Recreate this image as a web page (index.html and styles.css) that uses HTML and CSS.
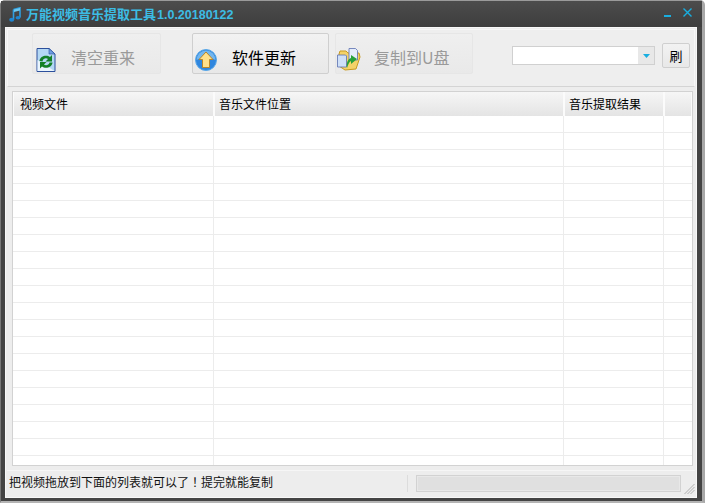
FILE: index.html
```html
<!DOCTYPE html>
<html lang="zh">
<head>
<meta charset="utf-8">
<title>万能视频音乐提取工具</title>
<link rel="stylesheet" href="styles.css">
</head>
<body>
<div class="window">
  <header class="titlebar">
    <svg class="app-icon" width="12" height="15" viewBox="0 0 12 15"><path d="M4.500 2.500 L11 .8 L11 10.500 M4.500 2.500 L4.500 12.500" fill="none" stroke="#2f9fe0" stroke-width="1.6"/><path d="M5 2.500 L11 1 L11 3.500 L5 5Z" fill="#6cc8f0"/><ellipse cx="2.700" cy="12.700" rx="2.500" ry="2" fill="#1f86d0"/><ellipse cx="9" cy="10.800" rx="2.400" ry="1.800" fill="#1f86d0"/></svg>
    <h1 class="title"><span class="title-cn">万能视频音乐提取工具</span><span class="title-ver">1.0.20180122</span></h1>
    <div class="win-controls">
      <svg class="ctl-min" width="7" height="3" viewBox="0 0 7 3"><rect width="7" height="2" fill="#18aee0"/></svg>
      <svg class="ctl-close" width="9" height="9" viewBox="0 0 9 9"><path d="M.5 .5 L8.500 8.500 M8.500 .5 L.5 8.500" stroke="#18aee0" stroke-width="1.4" fill="none"/></svg>
    </div>
  </header>
  <main class="client">
    <section class="toolbar">
      <button class="tool-btn disabled btn-clear">
        <svg class="tool-icon" width="20" height="24" viewBox="0 0 20 24">
          <path d="M1 .5 H13 L19 6 V23.500 H1Z" fill="#b4d8f4" stroke="#2c4f9c"/>
          <path d="M1.500 12 L18.500 23 H1.500Z" fill="#eaf5fd"/>
          <path d="M13 .5 L19 6 H13Z" fill="#6f9fe0" stroke="#2c4f9c" stroke-width=".6"/>
          <path d="M3.500 13 C4 7.500 11 6.500 14 9 L16 7 V13.500 H9.500 L12 11 C10 9.500 7 10.500 6.500 13.500Z" fill="#138026"/>
          <path d="M16.500 14.500 C16 20 9 21 6 18.500 L4 20.500 V14 H10.500 L8 16.500 C10 18 13 17 13.500 14.500Z" fill="#138026"/>
        </svg>
        <span class="tool-label">清空重来</span>
      </button>
      <button class="tool-btn btn-update">
        <svg class="tool-icon" width="22" height="22" viewBox="0 0 22 22">
          <circle cx="11" cy="11" r="10.500" fill="#2f86de" stroke="#5aa8e8"/>
          <path d="M1.500 11 A9.500 9.500 0 0 1 20.500 11 C15 8 7 8 1.500 11Z" fill="#73b6ee"/>
          <path d="M11 3 L18 10.500 H14.500 V18.500 H7.500 V10.500 H4Z" fill="#ffe08a" stroke="#b8862c"/>
        </svg>
        <span class="tool-label">软件更新</span>
      </button>
      <button class="tool-btn disabled btn-copy">
        <svg class="tool-icon" width="24" height="23" viewBox="0 0 24 23">
          <path d="M2 6 L3 3 H9 L11 5 H22 L23 9 L19 21 L8 22 L2 18Z" fill="#f4d268" stroke="#c89a20"/>
          <path d="M12 .5 H18.500 L20.500 2.500 V12 H12Z" fill="#e4ecfa" stroke="#5a70b0" stroke-width=".8"/>
          <path d="M.5 7 H8.500 L9.500 8 V19 H.5Z" fill="#cfe0f8" stroke="#5a70b0" stroke-width=".8"/>
          <path d="M10 20 C9 15 11 11 14 10 V7 L20 11 L14 16 V13 C12 14 11 17 10 20Z" fill="#27a03a"/>
        </svg>
        <span class="tool-label">复制到U盘</span>
      </button>
      <div class="combo">
        <div class="combo-field"></div>
        <div class="combo-arrow"><svg width="7" height="4" viewBox="0 0 7 4"><path d="M0 0 H7 L3.500 4Z" fill="#18aee0"/></svg></div>
      </div>
      <button class="refresh-btn">刷</button>
    </section>
    <section class="table">
      <div class="row head">
        <div class="cell c1">视频文件</div>
        <div class="cell c2">音乐文件位置</div>
        <div class="cell c3">音乐提取结果</div>
        <div class="cell c4"></div>
      </div>
      <div class="rows">
        <div class="row"><div class="cell c1"></div><div class="cell c2"></div><div class="cell c3"></div><div class="cell c4"></div></div>
        <div class="row"><div class="cell c1"></div><div class="cell c2"></div><div class="cell c3"></div><div class="cell c4"></div></div>
        <div class="row"><div class="cell c1"></div><div class="cell c2"></div><div class="cell c3"></div><div class="cell c4"></div></div>
        <div class="row"><div class="cell c1"></div><div class="cell c2"></div><div class="cell c3"></div><div class="cell c4"></div></div>
        <div class="row"><div class="cell c1"></div><div class="cell c2"></div><div class="cell c3"></div><div class="cell c4"></div></div>
        <div class="row"><div class="cell c1"></div><div class="cell c2"></div><div class="cell c3"></div><div class="cell c4"></div></div>
        <div class="row"><div class="cell c1"></div><div class="cell c2"></div><div class="cell c3"></div><div class="cell c4"></div></div>
        <div class="row"><div class="cell c1"></div><div class="cell c2"></div><div class="cell c3"></div><div class="cell c4"></div></div>
        <div class="row"><div class="cell c1"></div><div class="cell c2"></div><div class="cell c3"></div><div class="cell c4"></div></div>
        <div class="row"><div class="cell c1"></div><div class="cell c2"></div><div class="cell c3"></div><div class="cell c4"></div></div>
        <div class="row"><div class="cell c1"></div><div class="cell c2"></div><div class="cell c3"></div><div class="cell c4"></div></div>
        <div class="row"><div class="cell c1"></div><div class="cell c2"></div><div class="cell c3"></div><div class="cell c4"></div></div>
        <div class="row"><div class="cell c1"></div><div class="cell c2"></div><div class="cell c3"></div><div class="cell c4"></div></div>
        <div class="row"><div class="cell c1"></div><div class="cell c2"></div><div class="cell c3"></div><div class="cell c4"></div></div>
        <div class="row"><div class="cell c1"></div><div class="cell c2"></div><div class="cell c3"></div><div class="cell c4"></div></div>
        <div class="row"><div class="cell c1"></div><div class="cell c2"></div><div class="cell c3"></div><div class="cell c4"></div></div>
        <div class="row"><div class="cell c1"></div><div class="cell c2"></div><div class="cell c3"></div><div class="cell c4"></div></div>
        <div class="row"><div class="cell c1"></div><div class="cell c2"></div><div class="cell c3"></div><div class="cell c4"></div></div>
        <div class="row"><div class="cell c1"></div><div class="cell c2"></div><div class="cell c3"></div><div class="cell c4"></div></div>
        <div class="row"><div class="cell c1"></div><div class="cell c2"></div><div class="cell c3"></div><div class="cell c4"></div></div>
        <div class="row"><div class="cell c1"></div><div class="cell c2"></div><div class="cell c3"></div><div class="cell c4"></div></div>
      </div>
    </section>
    <footer class="statusbar">
      <div class="status-text">把视频拖放到下面的列表就可以了<span class="fw-mark" lang="zh-Hant">！</span>提完就能复制</div>
      <div class="status-sep"></div>
      <div class="progress"></div>
      <svg class="grip" width="11" height="10" viewBox="0 0 11 10"><path d="M10.500 0 L.5 10 M10.500 3 L3.500 10 M10.500 6 L6.500 10" stroke="#a8a8a8" stroke-width=".9" fill="none"/></svg>
    </footer>
  </main>
</div>
</body>
</html>
```
FILE: styles.css
```css
* { box-sizing: border-box; }
html, body { margin: 0; padding: 0; }
body {
  width: 705px;
  height: 503px;
  overflow: hidden;
  background: #fff;
  font-family: "Noto Sans CJK SC", "Liberation Sans", sans-serif;
}
.window {
  width: 705px;
  height: 503px;
  display: flex;
  flex-direction: column;
  background: #444;
  border-radius: 5px 5px 0 0;
  padding: 0 5px 3px 4px;
  border-top: 1px solid #9a9a9a;
  border-left: 1px solid #777;
  border-right: 3px solid #a8a8a8;
  border-bottom: 2px solid #b4b4b4;
}
.titlebar {
  height: 26px;
  flex: none;
  display: flex;
  align-items: center;
  gap: 5px;
  background: linear-gradient(#4c4c4c, #3e3e3e);
  margin: 0 -5px 0 -4px;
  padding: 0 10px 0 8px;
}
.app-icon { flex: none; }
.title {
  margin: 0;
  font-weight: 700;
  font-size: 13px;
  color: #3cbce4;
  display: flex;
  align-items: baseline;
  line-height: 18px;
}
.title-cn { font-size: 13px; }
.title-ver { font-family: "Liberation Sans", sans-serif; font-size: 12.500px; margin-left: 1px; }
.win-controls {
  margin-left: auto;
  display: flex;
  align-items: flex-start;
  gap: 12px;
}
.ctl-min { margin-top: 5px; }
.ctl-close { margin-top: -2px; }
.client {
  flex: 1;
  min-height: 0;
  display: flex;
  flex-direction: column;
  background: #ededed;
  border: 1px solid #f8f8f8;
  padding: 1px;
}
.toolbar {
  height: 58px;
  flex: none;
  display: flex;
  align-items: flex-start;
  padding-top: 3px;
  border: 1px solid #f7f7f7;
  border-bottom: 1px solid #d4d4d4;
  background: #eeeeee;
}
.tool-btn {
  height: 41px;
  display: flex;
  align-items: flex-start;
  font-family: inherit;
  font-size: 16px;
  line-height: 24px;
  color: #000;
  background: linear-gradient(#f2f2f2, #e8e8e8);
  border: 1px solid #cfcfcf;
  border-radius: 2px;
  padding: 0;
}
.tool-btn.disabled {
  border-color: #e6e6e6;
  color: #9a9a9a;
  background: linear-gradient(#efefef, #e9e9e9);
}
.tool-label { margin-top: 11px; }
.tool-icon { flex: none; }
.btn-clear { width: 129px; margin-left: 24px; }
.btn-clear .tool-icon { margin-left: 3px; margin-top: 14px; }
.btn-clear .tool-label { margin-left: 15px; }
.btn-update { width: 137px; margin-left: 31px; }
.btn-update .tool-icon { margin-left: 2px; margin-top: 15px; }
.btn-update .tool-label { margin-left: 15px; }
.btn-copy { width: 138px; margin-left: 6px; }
.btn-copy .tool-icon { margin-left: 1px; margin-top: 14px; }
.btn-copy .tool-label { margin-left: 13px; }
.combo {
  margin-left: 39px;
  margin-top: 13px;
  width: 143px;
  height: 19px;
  display: flex;
  border: 1px solid #d0d0d0;
  background: #fff;
}
.combo-field { flex: 1; }
.combo-arrow {
  width: 16px;
  display: flex;
  align-items: center;
  justify-content: center;
  background: #e8e8e8;
}
.refresh-btn {
  margin-left: 7px;
  margin-top: 10px;
  width: 28px;
  height: 25px;
  padding: 0;
  font-family: inherit;
  font-size: 13px;
  color: #000;
  background: linear-gradient(#f2f2f2, #e8e8e8);
  border: 1px solid #cfcfcf;
  border-radius: 2px;
}
.table {
  height: 375px;
  flex: none;
  margin: 4px 0 0 5px;
  width: 681px;
  background: #fff;
  border: 1px solid #d2d2d2;
  display: flex;
  flex-direction: column;
  overflow: hidden;
}
.rows { flex: 1; min-height: 0; overflow: hidden; }
.row { display: flex; height: 17px; border-bottom: 1px solid #ececec; }
.row.head {
  height: 24px;
  flex: none;
  background: linear-gradient(#f6f6f6, #e4e4e4);
  border: 0;
  font-size: 12px;
  color: #000;
}
.cell { height: 100%; border-right: 1px solid #ececec; }
.head .cell {
  display: flex;
  align-items: center;
  padding: 0 0 2px 6px;
  border-right: 1px solid #fbfbfb;
  border-left: 1px solid #fbfbfb;
}
.head .c2, .head .c3 { padding-left: 4px; }
.c1 { width: 201px; }
.c2 { width: 350px; }
.c3 { width: 100px; }
.c4 { width: 28px; border-right: 0; }
.statusbar {
  flex: 1;
  min-height: 0;
  display: flex;
  align-items: flex-start;
  border-top: 1px solid #f6f6f6;
  margin-top: 4px;
  padding-top: 2px;
}
.status-text { width: 400px; font-size: 12px; line-height: 17px; color: #111; padding-left: 2px; }
.fw-mark { font-family: "Noto Sans CJK TC", sans-serif; }
.status-sep { width: 1px; height: 17px; margin-top: 2px; background: #dcdcdc; }
.progress {
  width: 265px;
  height: 17px;
  margin-top: 2px;
  margin-left: 8px;
  background: #e0e0e0;
  border: 1px solid #d2d2d2;
  box-shadow: inset 0 0 0 1px #e8e8e8;
}
.grip { margin-left: 3px; margin-top: 11px; }
```
